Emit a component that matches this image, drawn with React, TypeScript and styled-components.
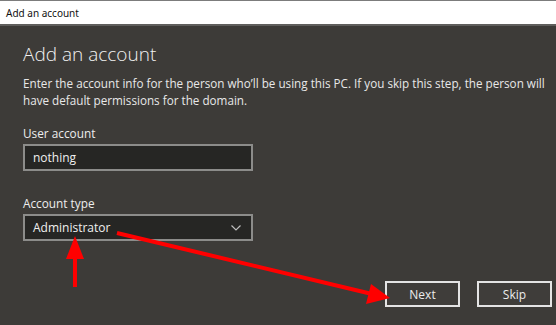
import React from "react";
import styled, { createGlobalStyle } from "styled-components";

const GlobalStyle = createGlobalStyle`
  html, body { margin: 0; padding: 0; }
  body {
    background: #3d3b38;
    overflow: hidden;
    font-family: "Open Sans", "Noto Sans", sans-serif;
  }
  * { box-sizing: border-box; }
`;

const Window = styled.div`
  position: relative;
  width: 556px;
  height: 325px;
  background: #3d3b38;
  display: flex;
  flex-direction: column;
`;

const TitleBar = styled.div`
  height: 26px;
  background: #ffffff;
  border-top: 1px solid #7c7c7c;
  border-bottom: 2px solid #5f5e5c;
  display: flex;
  align-items: center;
  padding-left: 6px;
  font-size: 10px;
  color: #111;
  font-family: "Noto Sans", "Open Sans", sans-serif;
`;

const Content = styled.div`
  padding: 14px 0 0 23px;
  display: flex;
  flex-direction: column;
`;

const Heading = styled.h1`
  margin: 0;
  font-size: 19px;
  font-weight: 300;
  color: #f2f2f2;
  line-height: 28px;
`;

const Description = styled.p`
  margin: 7px 0 0;
  font-size: 11.7px;
  line-height: 17px;
  color: #e8e8e8;
  white-space: nowrap;
`;

const Label = styled.div<{ $top: number }>`
  margin-top: ${(p) => p.$top}px;
  font-size: 11.8px;
  line-height: 17px;
  color: #ededed;
`;

const Field = styled.div`
  margin-top: 2px;
  width: 230px;
  height: 27px;
  border: 2px solid #8c8c8a;
  background: #262624;
  display: flex;
  align-items: center;
  justify-content: space-between;
  padding: 0 10px 0 8px;
  font-size: 12px;
  color: #f0f0f0;
`;

const Chevron = styled.svg`
  width: 10px;
  height: 6px;
`;

const ButtonRow = styled.div`
  display: flex;
  justify-content: flex-end;
  gap: 17px;
  margin-top: 40px;
  padding-right: 4px;
`;

const Button = styled.div`
  width: 75px;
  height: 26px;
  border: 2px solid #e4e4e4;
  background: #3f3d3a;
  display: flex;
  align-items: center;
  justify-content: center;
  font-size: 12px;
  color: #ececec;
`;

const Annotation = styled.svg`
  position: absolute;
  left: 0;
  top: 0;
  pointer-events: none;
`;

export default function App() {
  return (
    <>
      <GlobalStyle />
      <Window>
        <TitleBar>Add an account</TitleBar>
        <Content>
          <Heading>Add an account</Heading>
          <Description>
            Enter the account info for the person who’ll be using this PC. If you skip this step, the person will
            <br />
            have default permissions for the domain.
          </Description>
          <Label $top={16}>User account</Label>
          <Field>nothing</Field>
          <Label $top={24}>Account type</Label>
          <Field>
            <span>Administrator</span>
            <Chevron viewBox="0 0 10 6">
              <polyline points="0.5,0.5 5,5 9.5,0.5" fill="none" stroke="#bdbdbd" strokeWidth="1.2" />
            </Chevron>
          </Field>
          <ButtonRow>
            <Button>Next</Button>
            <Button>Skip</Button>
          </ButtonRow>
        </Content>
        <Annotation width="556" height="325" viewBox="0 0 556 325">
          <line x1="117" y1="233" x2="372" y2="294" stroke="#ff0000" strokeWidth="4" />
          <polygon points="390,298 366,304 371,284" fill="#ff0000" />
          <line x1="75" y1="287" x2="75" y2="255" stroke="#ff0000" strokeWidth="4" />
          <polygon points="75,236 66,259 84,259" fill="#ff0000" />
        </Annotation>
      </Window>
    </>
  );
}
